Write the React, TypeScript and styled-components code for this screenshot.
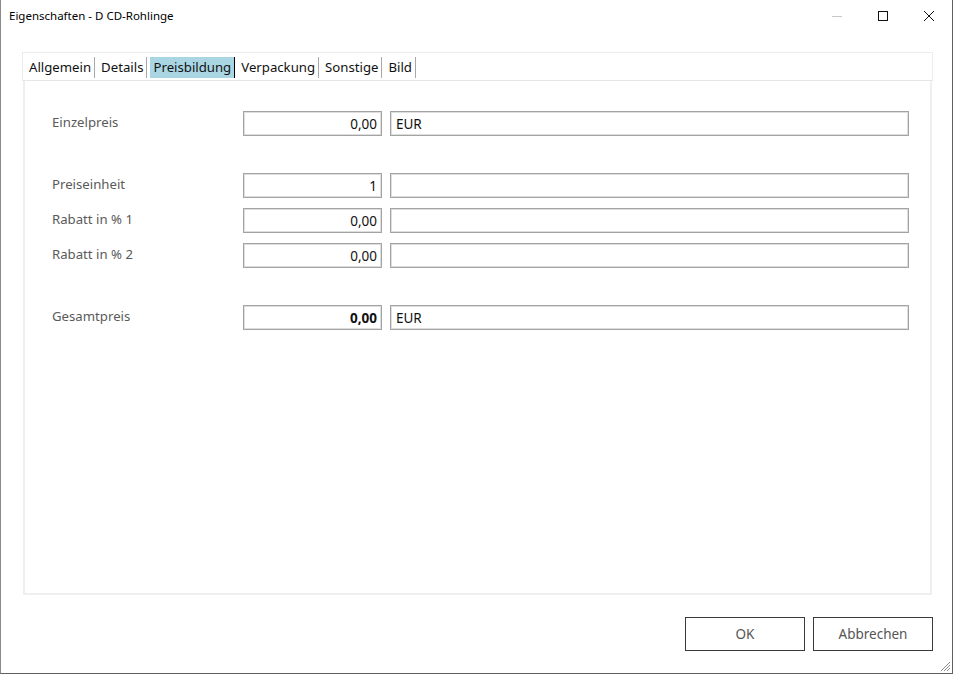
import React from 'react';
import styled, { createGlobalStyle } from 'styled-components';

const GlobalStyle = createGlobalStyle`
  html, body {
    margin: 0;
    padding: 0;
    background: #ffffff;
  }
  body {
    font-family: 'Noto Sans', 'Open Sans', sans-serif;
  }
`;

interface IRow {
  label: string;
  value: string;
  unit: string;
  bold?: boolean;
}

const groups: IRow[][] = [
  [{ label: 'Einzelpreis', value: '0,00', unit: 'EUR' }],
  [
    { label: 'Preiseinheit', value: '1', unit: '' },
    { label: 'Rabatt in % 1', value: '0,00', unit: '' },
    { label: 'Rabatt in % 2', value: '0,00', unit: '' },
  ],
  [{ label: 'Gesamtpreis', value: '0,00', unit: 'EUR', bold: true }],
];

const tabs = ['Allgemein', 'Details', 'Preisbildung', 'Verpackung', 'Sonstige', 'Bild'];
const activeTab = 'Preisbildung';

const Style = {
  Window: styled.div`
    position: relative;
    width: 953px;
    height: 674px;
    box-sizing: border-box;
    border-left: 1px solid #8a8a8a;
    border-right: 1px solid #5f5f5f;
    border-bottom: 1px solid #5f5f5f;
    background: #fff;
    display: flex;
    flex-direction: column;
    overflow: hidden;
  `,
  TitleBar: styled.div`
    height: 31px;
    display: flex;
    align-items: center;
    flex-shrink: 0;
  `,
  Title: styled.div`
    flex: 1;
    padding-left: 8px;
    font-family: 'Noto Sans', sans-serif;
    font-size: 11.5px;
    color: #000;
    margin-top: -1px;
  `,
  Control: styled.div`
    width: 46px;
    height: 31px;
    display: flex;
    align-items: center;
    justify-content: center;
  `,
  Body: styled.div`
    flex: 1;
    display: flex;
    flex-direction: column;
    padding: 21px 19px 0 21px;
  `,
  Panel: styled.div`
    height: 543px;
    display: flex;
    flex-direction: column;
  `,
  TabStrip: styled.div`
    height: 27px;
    border: 1px solid #ececec;
    border-bottom-color: #e6e6e6;
    display: flex;
    align-items: center;
    padding-left: 3px;
  `,
  Tab: styled.div<{ $active: boolean; $focus: boolean }>`
    font-family: 'Noto Sans', sans-serif;
    font-size: 13.2px;
    line-height: 21px;
    height: 21px;
    padding: 0 3px;
    margin-right: 3px;
    color: #111;
    background: ${({ $active }) => ($active ? '#aad6e4' : 'transparent')};
    border-right: 1px solid ${({ $focus }) => ($focus ? '#000' : '#a8a8a8')};
    margin-top: 2px;
  `,
  Content: styled.div`
    flex: 1;
    border: 2px solid #efefef;
    border-top: none;
    margin: 0 1px;
    padding: 30px 0 0 27px;
    display: flex;
    flex-direction: column;
    gap: 37px;
  `,
  Group: styled.div`
    display: flex;
    flex-direction: column;
    gap: 10px;
  `,
  Row: styled.div`
    display: flex;
    align-items: center;
    height: 25px;
  `,
  Label: styled.div`
    width: 191px;
    font-family: 'Noto Sans', sans-serif;
    font-size: 13.2px;
    color: #5a5a5a;
    margin-top: -3px;
  `,
  Field: styled.div<{ $width: number; $align: 'left' | 'right'; $bold?: boolean }>`
    width: ${({ $width }) => $width}px;
    height: 25px;
    box-sizing: border-box;
    border: 1px solid #a3a3a3;
    box-shadow: inset 0 0 0 1px #dedede;
    display: flex;
    align-items: center;
    justify-content: ${({ $align }) => ($align === 'right' ? 'flex-end' : 'flex-start')};
    padding: 0 4px 0 5px;
    font-family: 'Noto Sans', sans-serif;
    font-size: 13.5px;
    font-weight: ${({ $bold }) => ($bold ? 700 : 400)};
    color: #111;
    margin-right: 8px;
  `,
  Footer: styled.div`
    display: flex;
    justify-content: flex-end;
    gap: 8px;
    padding-top: 22px;
  `,
  Button: styled.div`
    width: 118px;
    height: 32px;
    border: 1px solid #3a3a3a;
    display: flex;
    align-items: center;
    justify-content: center;
    font-family: 'Noto Sans', sans-serif;
    font-size: 13.5px;
    color: #555;
  `,
  Grip: styled.svg`
    position: absolute;
    right: 1px;
    bottom: 1px;
  `,
};

const TitleBar = () => (
  <Style.TitleBar>
    <Style.Title>Eigenschaften - D CD-Rohlinge</Style.Title>
    <Style.Control>
      <svg width="12" height="12" viewBox="0 0 12 12">
        <line x1="1" y1="6.5" x2="11" y2="6.5" stroke="#c8c8c8" strokeWidth="1" />
      </svg>
    </Style.Control>
    <Style.Control>
      <svg width="12" height="12" viewBox="0 0 12 12">
        <rect x="1.5" y="1.5" width="9" height="9" fill="none" stroke="#111" strokeWidth="1" />
      </svg>
    </Style.Control>
    <Style.Control>
      <svg width="12" height="12" viewBox="0 0 12 12">
        <path d="M1 1 L11 11 M11 1 L1 11" stroke="#111" strokeWidth="1" />
      </svg>
    </Style.Control>
  </Style.TitleBar>
);

const Row = ({ row }: { row: IRow }) => (
  <Style.Row>
    <Style.Label>{row.label}</Style.Label>
    <Style.Field $width={139} $align="right" $bold={row.bold}>
      {row.value}
    </Style.Field>
    <Style.Field $width={519} $align="left">
      {row.unit}
    </Style.Field>
  </Style.Row>
);

const App = () => {
  const activeIndex = tabs.indexOf(activeTab);
  return (
    <>
      <GlobalStyle />
      <Style.Window>
        <TitleBar />
        <Style.Body>
          <Style.Panel>
            <Style.TabStrip>
              {tabs.map((t, i) => (
                <Style.Tab key={t} $active={t === activeTab} $focus={i === activeIndex}>
                  {t}
                </Style.Tab>
              ))}
            </Style.TabStrip>
            <Style.Content>
              {groups.map((g, i) => (
                <Style.Group key={i}>
                  {g.map((r) => (
                    <Row key={r.label} row={r} />
                  ))}
                </Style.Group>
              ))}
            </Style.Content>
          </Style.Panel>
          <Style.Footer>
            <Style.Button>OK</Style.Button>
            <Style.Button>Abbrechen</Style.Button>
          </Style.Footer>
        </Style.Body>
        <Style.Grip width="12" height="12" viewBox="0 0 12 12">
          <path d="M11 2 L2 11 M11 5 L5 11 M11 8 L8 11" stroke="#8a8a8a" strokeWidth="1" />
        </Style.Grip>
      </Style.Window>
    </>
  );
};

export default App;
